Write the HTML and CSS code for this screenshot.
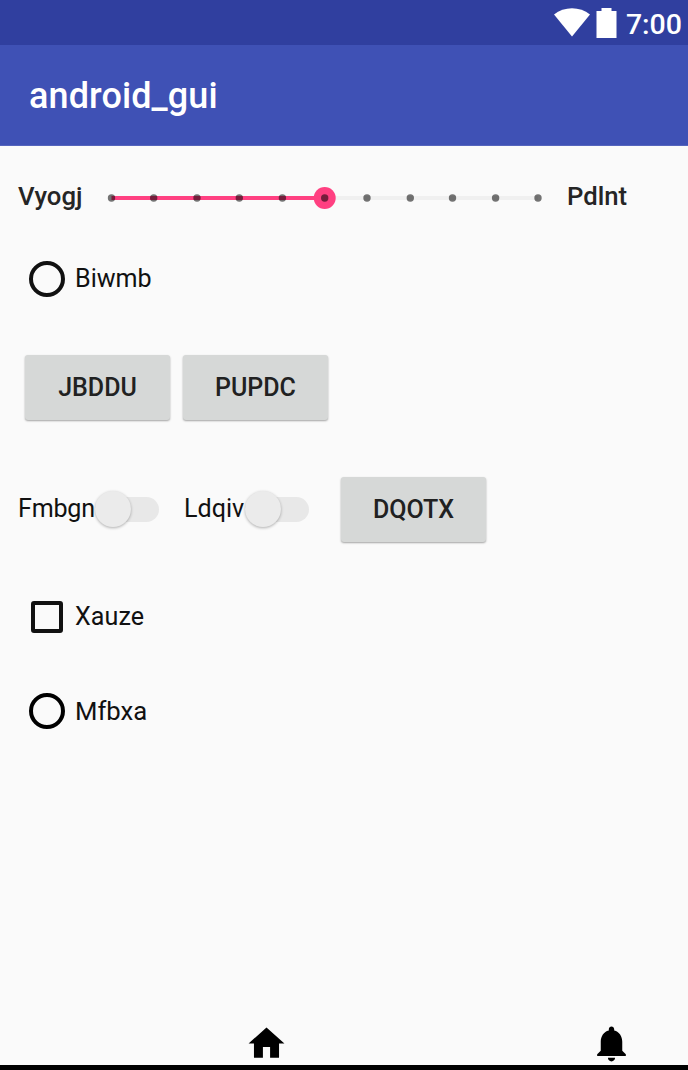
FILE: index.html
```
<!DOCTYPE html>
<html lang="en">
<head>
<meta charset="utf-8">
<title>android_gui</title>
<link rel="stylesheet" href="styles.css">
</head>
<body>
<div class="screen">
  <div class="status">
    <svg class="wifi" width="36" height="29" viewBox="0 0 36 29"><path d="M0 6.500C10-2 26-2 36 6.500L18 28.500Z" fill="#fff"/></svg>
    <svg class="battery" width="21" height="30" viewBox="0 0 21 30"><path d="M5.500 0h10v3H20.500v27H.5V3h5z" fill="#fff"/></svg>
    <span class="clock">7:00</span>
  </div>
  <header class="toolbar"><h1 class="title">android_gui</h1></header>
  <main class="content">
    <div class="row row-slider">
      <span class="label medium start">Vyogj</span>
      <svg class="slider" width="438" height="24" viewBox="0 0 438 24">
        <path d="M5.500 12H432" stroke="#f0f0f0" stroke-width="4"/>
        <path d="M5.500 12H218.500" stroke="#ff4081" stroke-width="4"/>
        <circle cx="218.700" cy="12" r="11" fill="#ff4081"/>
        <g fill="#000" fill-opacity=".54">
          <circle cx="5.500" cy="12" r="3.700"/><circle cx="47.700" cy="12" r="3.700"/><circle cx="91" cy="12" r="3.700"/><circle cx="133.300" cy="12" r="3.700"/><circle cx="176.400" cy="12" r="3.700"/><circle cx="218.700" cy="12" r="3.700"/><circle cx="261" cy="12" r="3.700"/><circle cx="304.300" cy="12" r="3.700"/><circle cx="346.500" cy="12" r="3.700"/><circle cx="389.600" cy="12" r="3.700"/><circle cx="432" cy="12" r="3.700"/>
        </g>
      </svg>
      <span class="label medium">Pdlnt</span>
    </div>
    <div class="row row-radio"><span class="radio"></span><span class="label">Biwmb</span></div>
    <div class="row row-buttons"><button class="btn">JBDDU</button><button class="btn">PUPDC</button></div>
    <div class="row row-switches">
      <span class="label switch-first">Fmbgn</span><span class="switch"><span class="thumb"></span></span>
      <span class="label switch-second">Ldqiv</span><span class="switch"><span class="thumb"></span></span>
      <button class="btn btn-end">DQOTX</button>
    </div>
    <div class="row row-check"><span class="check"></span><span class="label label-check">Xauze</span></div>
    <div class="row row-radio-last"><span class="radio radio-dark"></span><span class="label label-last">Mfbxa</span></div>
  </main>
  <nav class="nav">
    <svg width="43" height="43" viewBox="0 0 24 24"><path d="M10 20v-6h4v6h5v-8h3L12 3 2 12h3v8z"/></svg>
    <svg width="43" height="43" viewBox="0 0 24 24"><path d="M12 22c1.100 0 2-.9 2-2h-4c0 1.100.89 2 2 2zm6-6v-5c0-3.070-1.640-5.640-4.500-6.320V4c0-.83-.67-1.500-1.500-1.500s-1.500.67-1.500 1.500v.68C7.630 5.360 6 7.920 6 11v5l-2 2v1h16v-1l-2-2z"/></svg>
  </nav>
</div>
</body>
</html>
```
FILE: styles.css
```
* { box-sizing: border-box; }
body { margin: 0; background: #fafafa; font-family: Roboto, sans-serif; }
.screen { width: 688px; height: 1070px; display: flex; flex-direction: column; overflow: hidden; }
.status { height: 45px; background: #303f9f; display: flex; align-items: flex-start; justify-content: flex-end; padding: 8px 6px 0 0; color: #fff; }
.battery { margin-left: 6px; }
.clock { margin-left: 9px; font-size: 28.500px; line-height: 34px; font-weight: 500; }
.toolbar { height: 101px; background: #3f51b5; border-bottom: 1px solid #5565bd; display: flex; align-items: center; padding: 2px 0 0 29px; }
.title { margin: 0; color: #fff; font-size: 36px; font-weight: 500; line-height: 42px; letter-spacing: .1px; }
.content { flex: 1; display: flex; flex-direction: column; }
.row { display: flex; align-items: center; flex: none; }
.label { font-size: 25.100px; line-height: 30px; color: #111; white-space: nowrap; }
.medium { font-size: 25.700px; font-weight: 500; color: #252525; padding-bottom: 4px; }
.row-slider { height: 104px; padding-left: 18px; }
.start { width: 88px; }
.slider { margin-right: 23px; }
.row-radio { height: 58px; padding-left: 29px; }
.radio { width: 36px; height: 36px; border: 4px solid #111; border-radius: 50%; margin-right: 10px; }
.radio-dark { border-color: #000; }
.row-buttons { height: 157px; padding: 1px 0 0 25px; gap: 13px; }
.btn { width: 145px; height: 65px; padding: 1px 0 0; border: 0; border-radius: 3px; background: #d6d8d7; box-shadow: 0 1px 2px rgba(0,0,0,.35); color: #212121; font: 500 25px/30px Roboto, sans-serif; }
.row-switches { height: 88px; padding-left: 18px; }
.switch-first { width: 77px; letter-spacing: -.2px; padding-bottom: 1px; }
.switch-second { width: 61px; margin-left: 25px; padding-bottom: 1px; }
.switch { width: 64px; height: 25px; border-radius: 13px; background: #e8e8e8; display: flex; align-items: center; }
.thumb { width: 36px; height: 36px; flex: none; border-radius: 50%; background: #ebebeb; box-shadow: 0 1px 3px rgba(0,0,0,.3); }
.btn-end { margin-left: 32px; }
.row-check { height: 127px; padding-left: 31px; }
.check { width: 32px; height: 32px; border: 4px solid #111; border-radius: 3px; margin-right: 12px; }
.label-check { padding-top: 1px; letter-spacing: .1px; }
.row-radio-last { height: 62px; padding-left: 29px; }
.label-last { font-size: 25.700px; padding-bottom: 1px; }
.nav { height: 48px; flex: none; border-bottom: 5px solid #000; display: flex; justify-content: space-between; padding: 0 55px 0 245px; }
```
